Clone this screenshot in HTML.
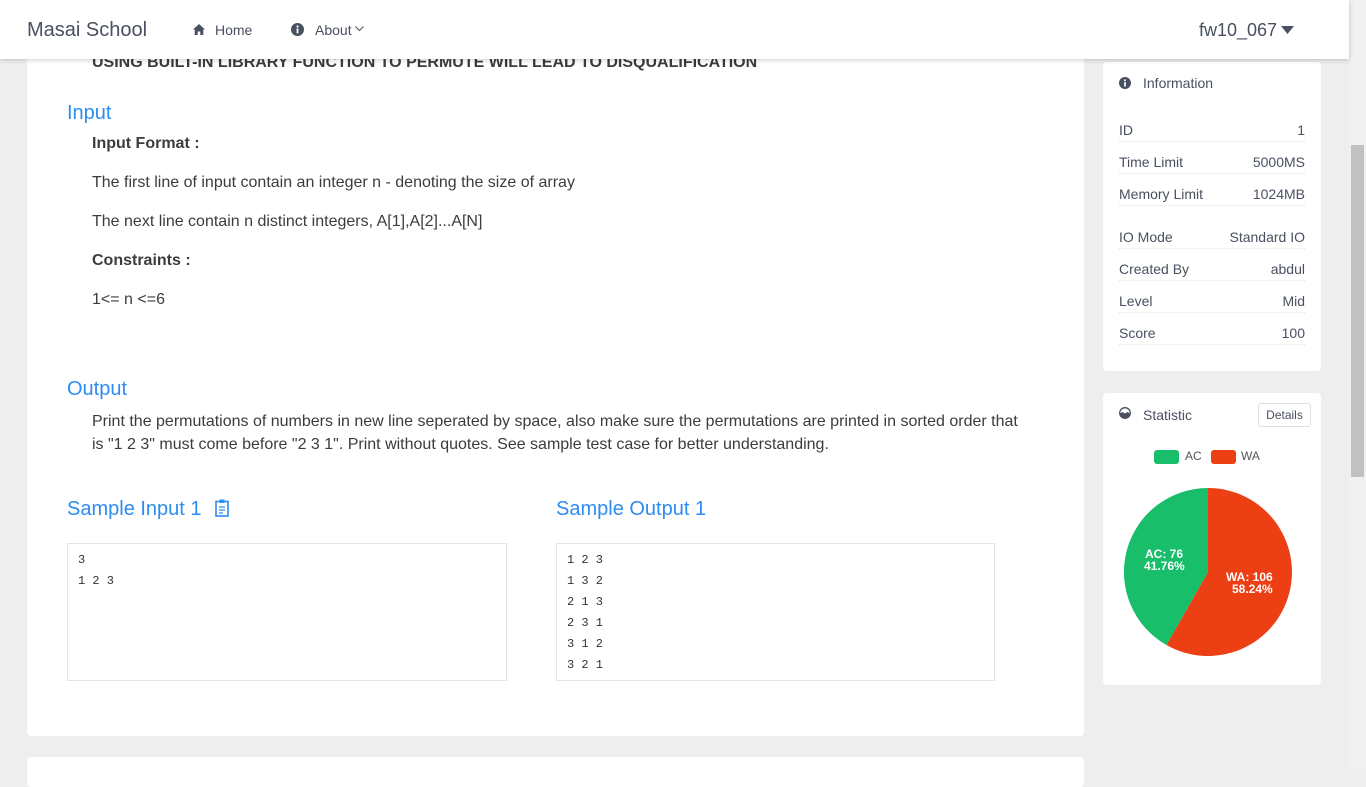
<!DOCTYPE html>
<html><head><meta charset="utf-8">
<style>
*{box-sizing:border-box;margin:0;padding:0}
body{width:1366px;height:768px;overflow:hidden;background:#eee;font-family:"Liberation Sans",Arial,sans-serif;color:#495060;position:relative}
.nav{position:absolute;left:0;top:0;width:1349px;height:59px;background:#fff;box-shadow:0 1px 5px rgba(0,0,0,.2);z-index:5}
.abs{position:absolute;white-space:nowrap}
.card{position:absolute;background:#fff;border-radius:4px}
.h{color:#2d8cf0;font-size:20px}
.p{font-size:16px;color:#3c3c3c}
.pre{position:absolute;border:1px solid #e4e4e4;font-family:"Liberation Mono",monospace;font-size:12px;line-height:21px;padding:6px 10px;color:#333;white-space:pre}
.row{position:absolute;left:16px;width:186px;font-size:14px;color:#495060;border-bottom:1px dotted #e2e2e2;height:22px;padding-top:2px}
.row span{position:absolute;right:0}
.sb{position:absolute;left:1349px;top:0;width:17px;height:768px;background:#f1f1f1}
</style></head><body>
<div class="nav">
 <div class="abs" style="left:27px;top:19px;font-size:20px;color:#495060">Masai School</div>
 <svg class="abs" style="left:193px;top:24px" width="12" height="11" viewBox="0 0 12 11"><path d="M6 0L0 5.5h1.7V11h3V7.5h2.6V11h3V5.5H12z" fill="#495060"/></svg>
 <div class="abs" style="left:215px;top:22px;font-size:14px">Home</div>
 <svg class="abs" style="left:291px;top:23px" width="13" height="13" viewBox="0 0 13 13"><circle cx="6.5" cy="6.5" r="6.5" fill="#495060"/><rect x="5.6" y="5.5" width="1.8" height="4.8" fill="#fff"/><circle cx="6.5" cy="3.5" r="1.1" fill="#fff"/></svg>
 <div class="abs" style="left:315px;top:22px;font-size:14px">About</div>
 <svg class="abs" style="left:355px;top:26px" width="9" height="6" viewBox="0 0 9 6"><path d="M.5.5l4 4 4-4" stroke="#495060" fill="none"/></svg>
 <div class="abs" style="left:1199px;top:20px;font-size:18px">fw10_067</div>
 <svg class="abs" style="left:1281px;top:26px" width="13" height="8" viewBox="0 0 13 8"><path d="M0 0h13L6.5 8z" fill="#495060"/></svg>
</div>
<div class="card" style="left:27px;top:40px;width:1057px;height:696px">
 <div class="abs" style="left:65px;top:14px;font-size:16px;font-weight:bold;color:#3c3c3c">USING BUILT-IN LIBRARY FUNCTION TO PERMUTE WILL LEAD TO DISQUALIFICATION</div>
 <div class="abs h" style="left:40px;top:62px">Input</div>
 <div class="abs p" style="left:65px;top:95px;font-weight:bold">Input Format :</div>
 <div class="abs p" style="left:65px;top:134px">The first line of input contain an integer n - denoting the size of array</div>
 <div class="abs p" style="left:65px;top:173px">The next line contain n distinct integers, A[1],A[2]...A[N]</div>
 <div class="abs p" style="left:65px;top:212px;font-weight:bold">Constraints :</div>
 <div class="abs p" style="left:65px;top:251px">1&lt;= n &lt;=6</div>
 <div class="abs h" style="left:40px;top:338px">Output</div>
 <div class="abs p" style="left:65px;top:370px;line-height:23px">Print the permutations of numbers in new line seperated by space, also make sure the permutations are printed in sorted order that<br>is "1 2 3" must come before "2 3 1". Print without quotes. See sample test case for better understanding.</div>
 <div class="abs h" style="left:40px;top:458px">Sample Input 1</div>
 <svg class="abs" style="left:188px;top:459px" width="14" height="18" viewBox="0 0 14 18"><rect x="1" y="2.5" width="12" height="14.5" fill="none" stroke="#2d8cf0" stroke-width="1.6"/><rect x="4.5" y="0.5" width="5" height="3.5" fill="#2d8cf0"/><path d="M4 8h6M4 11h6M4 14h4" stroke="#2d8cf0" stroke-width="1.3"/></svg>
 <div class="abs h" style="left:529px;top:458px">Sample Output 1</div>
 <div class="pre" style="left:40px;top:503px;width:440px;height:138px">3
1 2 3</div>
 <div class="pre" style="left:529px;top:503px;width:439px;height:138px">1 2 3
1 3 2
2 1 3
2 3 1
3 1 2
3 2 1</div>
</div>
<div class="card" style="left:27px;top:757px;width:1057px;height:30px"></div>
<div class="card" style="left:1103px;top:62px;width:218px;height:309px">
 <svg class="abs" style="left:16px;top:15px" width="12" height="12" viewBox="0 0 13 13"><circle cx="6.5" cy="6.5" r="6.5" fill="#495060"/><rect x="5.6" y="5.5" width="1.8" height="4.8" fill="#fff"/><circle cx="6.5" cy="3.5" r="1.1" fill="#fff"/></svg>
 <div class="abs" style="left:40px;top:13px;font-size:14px">Information</div>
 <div class="row" style="top:58px">ID<span>1</span></div>
 <div class="row" style="top:90px">Time Limit<span>5000MS</span></div>
 <div class="row" style="top:122px">Memory Limit<span>1024MB</span></div>
 <div class="row" style="top:165px">IO Mode<span>Standard IO</span></div>
 <div class="row" style="top:197px">Created By<span>abdul</span></div>
 <div class="row" style="top:229px">Level<span>Mid</span></div>
 <div class="row" style="top:261px">Score<span>100</span></div>
</div>
<div class="card" style="left:1103px;top:393px;width:218px;height:292px">
 <svg class="abs" style="left:16px;top:14px" width="12" height="12" viewBox="0 0 12 12"><circle cx="6" cy="6" r="5.3" fill="none" stroke="#495060" stroke-width="1.3"/><path d="M1 6.5a5 5 0 0 0 10 0L8.5 5 6 6.5 3.5 5z" fill="#495060"/></svg>
 <div class="abs" style="left:40px;top:14px;font-size:14px">Statistic</div>
 <div class="abs" style="left:155px;top:10px;width:53px;height:24px;border:1px solid #dcdee2;border-radius:3px;font-size:12px;text-align:center;line-height:22px">Details</div>
 <div class="abs" style="left:51px;top:57px;width:25px;height:14px;background:#19be6b;border-radius:3px"></div>
 <div class="abs" style="left:82px;top:56px;font-size:12px;color:#555">AC</div>
 <div class="abs" style="left:108px;top:57px;width:25px;height:14px;background:#ed3f14;border-radius:3px"></div>
 <div class="abs" style="left:138px;top:56px;font-size:12px;color:#555">WA</div>
 <svg class="abs" style="left:0;top:0" width="218" height="292">
  <g transform="translate(-1103,-393)">
   <path d="M1208 572L1208 488A84 84 0 1 1 1166.4 645Z" fill="#ed3f14"/>
   <path d="M1208 572L1166.4 645A84 84 0 0 1 1208 488Z" fill="#19be6b"/>
   <g fill="#fff" font-family="Liberation Sans,sans-serif" font-weight="bold" font-size="12">
    <text x="1145" y="558">AC: 76</text><text x="1144" y="570">41.76%</text>
    <text x="1226" y="581">WA: 106</text><text x="1232" y="593">58.24%</text>
   </g>
  </g>
 </svg>
</div>
<div class="sb"><div style="position:absolute;left:2px;top:145px;width:13px;height:332px;background:#c1c1c1"></div></div>
</body></html>
